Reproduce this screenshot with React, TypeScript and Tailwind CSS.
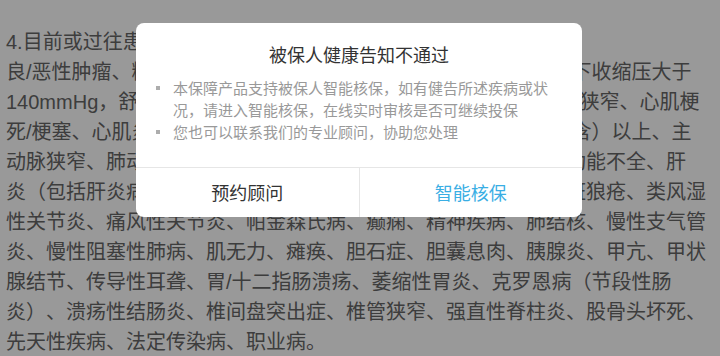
import React from 'react';

const lines = [
  '4.目前或过往患有下列疾病或症状：',
  '良/恶性肿瘤、糖尿病、高血压（指在未服用任何降压药物的情况下收缩压大于',
  '140mmHg，舒张压大于90mmHg）、冠心病、心绞痛、冠状动脉狭窄、心肌梗',
  '死/梗塞、心肌炎、心肌病、肺心病、心包炎、心功能不全二级（含）以上、主',
  '动脉狭窄、肺动脉高压、脑血管疾病、颅内动脉瘤、肝硬化、肝功能不全、肝',
  '炎（包括肝炎病毒携带者）、慢性肾炎、肾功能不全、系统性红斑狼疮、类风湿',
  '性关节炎、痛风性关节炎、帕金森氏病、癫痫、精神疾病、肺结核、慢性支气管',
  '炎、慢性阻塞性肺病、肌无力、瘫痪、胆石症、胆囊息肉、胰腺炎、甲亢、甲状',
  '腺结节、传导性耳聋、胃/十二指肠溃疡、萎缩性胃炎、克罗恩病（节段性肠',
  '炎）、溃疡性结肠炎、椎间盘突出症、椎管狭窄、强直性脊柱炎、股骨头坏死、',
  '先天性疾病、法定传染病、职业病。',
];

const notes = [
  '本保障产品支持被保人智能核保，如有健告所述疾病或状况，请进入智能核保，在线实时审核是否可继续投保',
  '您也可以联系我们的专业顾问，协助您处理',
];

export default function App() {
  return (
    <div className="relative h-[356px] w-[720px] overflow-hidden bg-white font-['Liberation_Sans','Noto_Sans_CJK_SC',sans-serif] [text-spacing-trim:space-all]">
      {/* health notice text behind the mask */}
      <div className="pl-[6px] pt-[27px] text-[20px] leading-[30px] text-[#666] whitespace-nowrap">
        {lines.map((l, i) => (
          <div key={i}>{l}</div>
        ))}
      </div>

      <div className="absolute inset-0 bg-black/40" />

      {/* dialog */}
      <div className="absolute left-[136px] top-[23px] w-[446px] overflow-hidden rounded-[8px] bg-white font-['Noto_Sans_CJK_SC',sans-serif]">
        <div className="px-5 pb-6 pt-[18px]">
          <h3 className="text-center text-[18px] leading-[26px] text-[#333]">被保人健康告知不通过</h3>
          <ul className="mt-[10px] pr-1">
            {notes.map((n) => (
              <li key={n} className="flex items-start gap-[13px] text-[15px] leading-[22px] text-[#999]">
                <span className="flex h-[22px] shrink-0 items-center">
                  <span className="block h-[4px] w-[4px] bg-[#adadad]" />
                </span>
                <span>{n}</span>
              </li>
            ))}
          </ul>
        </div>
        <div className="flex h-[50px] border-t border-[#e6e6e6]">
          <button type="button" className="flex-1 text-[18px] text-[#333]">
            预约顾问
          </button>
          <button type="button" className="flex-1 border-l border-[#e6e6e6] text-[18px] text-[#3aaee4]">
            智能核保
          </button>
        </div>
      </div>
    </div>
  );
}
